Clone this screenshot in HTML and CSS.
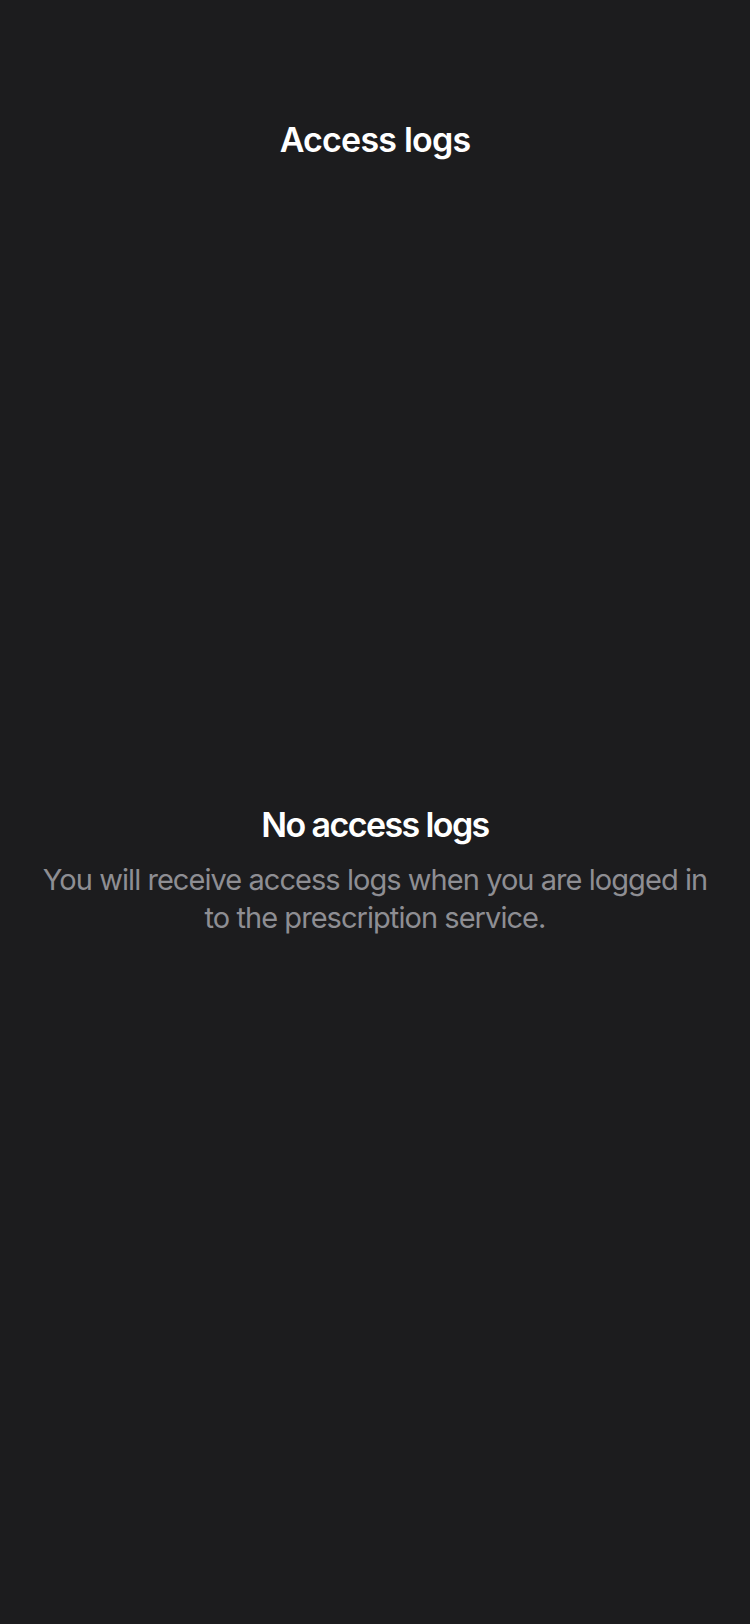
FILE: index.html
```html
<!DOCTYPE html>
<html lang="en">
<head>
<meta charset="utf-8">
<title>Access logs</title>
<link rel="stylesheet" href="styles.css">
</head>
<body>
<div class="screen">
  <header class="nav">
    <h1 class="nav-title">Access logs</h1>
  </header>
  <main class="empty">
    <h2 class="empty-title">No access logs</h2>
    <p class="empty-text">You will receive access logs when you are logged in to the prescription service.</p>
  </main>
</div>
</body>
</html>
```
FILE: styles.css
```css
html, body {
  margin: 0;
  padding: 0;
  background: #1c1c1e;
}
.screen {
  width: 750px;
  height: 1624px;
  display: flex;
  flex-direction: column;
  font-family: Inter, "Noto Sans", sans-serif;
}
.nav {
  padding-top: 120px;
  display: flex;
  justify-content: center;
}
.nav-title {
  margin: 0;
  font-size: 34px;
  line-height: 40px;
  font-weight: 600;
  color: #ffffff;
  letter-spacing: -0.8px;
}
.empty {
  margin-top: 645px;
  padding: 0 30px;
  display: flex;
  flex-direction: column;
  align-items: center;
  text-align: center;
}
.empty-title {
  margin: 0;
  font-size: 34px;
  line-height: 40px;
  font-weight: 600;
  color: #ffffff;
  letter-spacing: -1.6px;
}
.empty-text {
  margin: 16px 0 0;
  font-size: 29px;
  line-height: 38px;
  font-weight: 400;
  color: #8e8e93;
  letter-spacing: -0.95px;
}
```
